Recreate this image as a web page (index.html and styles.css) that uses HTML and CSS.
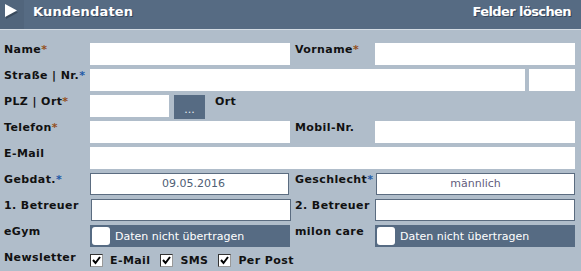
FILE: index.html
```html
<!DOCTYPE html>
<html lang="de">

<head>
    <meta charset="UTF-8">
    <meta name="viewport" content="width=device-width, initial-scale=1.0">
    <title>Kundendaten</title>
    <link rel="stylesheet" href="styles.css">
</head>

<body>
    <div class="panel">
        <div class="panel-head">
            <span class="panel-toggle">
                <svg width="24" height="29" viewBox="0 0 24 29">
                    <polygon points="6,6 6,19 18,12.5" fill="#2b3847" opacity="0.6" />
                    <polygon points="5,4 5,17 17,10.5" fill="#fff" />
                </svg>
            </span>
            <span class="panel-title">Kundendaten</span>
            <span class="panel-action">Felder löschen</span>
        </div>

        <div class="form-grid">
            <label class="f-label">Name<span class="req">*</span></label>
            <input class="f-input" type="text">
            <label class="f-label f-label-right">Vorname<span class="req">*</span></label>
            <input class="f-input" type="text">

            <label class="f-label">Straße | Nr.<span class="req req-blue">*</span></label>
            <div class="f-row span-3">
                <input class="f-input f-grow" type="text">
                <input class="f-input f-nr" type="text">
            </div>

            <label class="f-label">PLZ | Ort<span class="req">*</span></label>
            <div class="f-row span-3">
                <input class="f-input f-plz" type="text">
                <button class="f-btn" type="button">...</button>
                <span class="f-label f-ort">Ort</span>
            </div>

            <label class="f-label">Telefon<span class="req">*</span></label>
            <input class="f-input" type="text">
            <label class="f-label f-label-right">Mobil-Nr.</label>
            <input class="f-input" type="text">

            <label class="f-label">E-Mail</label>
            <input class="f-input span-3" type="text">

            <label class="f-label">Gebdat.<span class="req req-blue">*</span></label>
            <div class="f-box f-date">09.05.2016</div>
            <label class="f-label f-label-right">Geschlecht<span class="req req-blue">*</span></label>
            <div class="f-box f-gender">männlich</div>

            <label class="f-label">1. Betreuer</label>
            <div class="f-box f-shift"></div>
            <label class="f-label f-label-right">2. Betreuer</label>
            <div class="f-box"></div>

            <label class="f-label">eGym</label>
            <div class="f-toggle"><span class="f-toggle-knob"></span>Daten nicht übertragen</div>
            <label class="f-label f-label-right">milon care</label>
            <div class="f-toggle"><span class="f-toggle-knob"></span>Daten nicht übertragen</div>

            <label class="f-label">Newsletter</label>
            <div class="f-checks span-3">
                <span class="f-check"><span class="f-check-box"><svg width="11" height="11" viewBox="0 0 11 11"><polyline points="2,5 4.5,8 9,2" fill="none" stroke="#000" stroke-width="2" /></svg></span>E-Mail</span>
                <span class="f-check"><span class="f-check-box"><svg width="11" height="11" viewBox="0 0 11 11"><polyline points="2,5 4.5,8 9,2" fill="none" stroke="#000" stroke-width="2" /></svg></span>SMS</span>
                <span class="f-check"><span class="f-check-box"><svg width="11" height="11" viewBox="0 0 11 11"><polyline points="2,5 4.5,8 9,2" fill="none" stroke="#000" stroke-width="2" /></svg></span>Per Post</span>
            </div>
        </div>
    </div>
</body>

</html>
```

FILE: styles.css
```css
* {
    margin: 0;
    padding: 0;
    box-sizing: border-box;
    font-family: "DejaVu Sans", Verdana, sans-serif;
}

body {
    background: #b0bdca;
    width: 581px;
    height: 271px;
    overflow: hidden;
}

.panel-head {
    display: flex;
    height: 30px;
    background: #566b83;
    border-bottom: 1px solid #d3dbe3;
    color: #fff;
}

.panel-toggle {
    width: 24px;
    height: 29px;
    background: #51657c;
}

.panel-toggle svg {
    display: block;
}

.panel-title,
.panel-action {
    font-size: 13px;
    font-weight: bold;
    line-height: 16px;
    padding-top: 4px;
    text-shadow: 1px 1px 0 #34445a;
}

.panel-title {
    flex: 1;
    padding-left: 9px;
    letter-spacing: 0.2px;
}

.panel-action {
    padding-right: 10px;
    letter-spacing: -0.6px;
}

.form-grid {
    display: grid;
    grid-template-columns: 86px 200px 85px 200px;
    grid-auto-rows: 22px;
    row-gap: 4px;
    padding: 13px 0 0 4px;
}

.span-3 {
    grid-column: span 3;
}

.f-label {
    font-size: 11px;
    font-weight: bold;
    line-height: 14px;
    color: #111;
    letter-spacing: 0.4px;
    white-space: nowrap;
}

.f-label-right {
    padding-left: 5px;
}

.req {
    color: #94501c;
}

.req-blue {
    color: #1f5aa8;
}

.f-input {
    display: block;
    height: 22px;
    border: none;
    outline: none;
    background: #fff;
    font-size: 11px;
}

.f-row {
    display: flex;
    height: 22px;
}

.f-grow {
    width: 435px;
}

.f-nr {
    width: 46px;
    margin-left: 4px;
}

.f-plz {
    width: 79px;
}

.f-btn {
    width: 31px;
    height: 24px;
    margin-left: 5px;
    border: none;
    background: #566b83;
    color: #e8edf2;
    font-size: 11px;
    line-height: 22px;
    padding-top: 4px;
}

.f-ort {
    margin-left: 10px;
}

.f-box {
    height: 22px;
    background: #fff;
    border: 1px solid #5b6c80;
    font-size: 11px;
    line-height: 20px;
    text-align: center;
}

.f-date {
    color: #4f6075;
    margin-right: 1px;
    padding-left: 8px;
}

.f-gender {
    color: #625d7c;
    margin-left: 1px;
}

.f-shift {
    margin-left: 1px;
    margin-right: -1px;
}

.f-toggle {
    display: flex;
    align-items: center;
    height: 22px;
    background: #566b83;
    color: #fff;
    font-size: 11px;
}

.f-toggle-knob {
    width: 18px;
    height: 18px;
    margin: 0 5px 0 2px;
    background: #fff;
    border-radius: 3px;
}

.f-checks {
    display: flex;
    padding-top: 3px;
}

.f-check {
    display: flex;
    font-size: 11px;
    font-weight: bold;
    line-height: 13px;
    letter-spacing: 0.4px;
    color: #111;
    margin-right: 10px;
}

.f-check-box {
    width: 13px;
    height: 13px;
    margin-right: 7px;
    background: #fff;
    border: 1px solid #333;
    border-right-color: #999;
    border-bottom-color: #999;
}

.f-check-box svg {
    display: block;
}
```
